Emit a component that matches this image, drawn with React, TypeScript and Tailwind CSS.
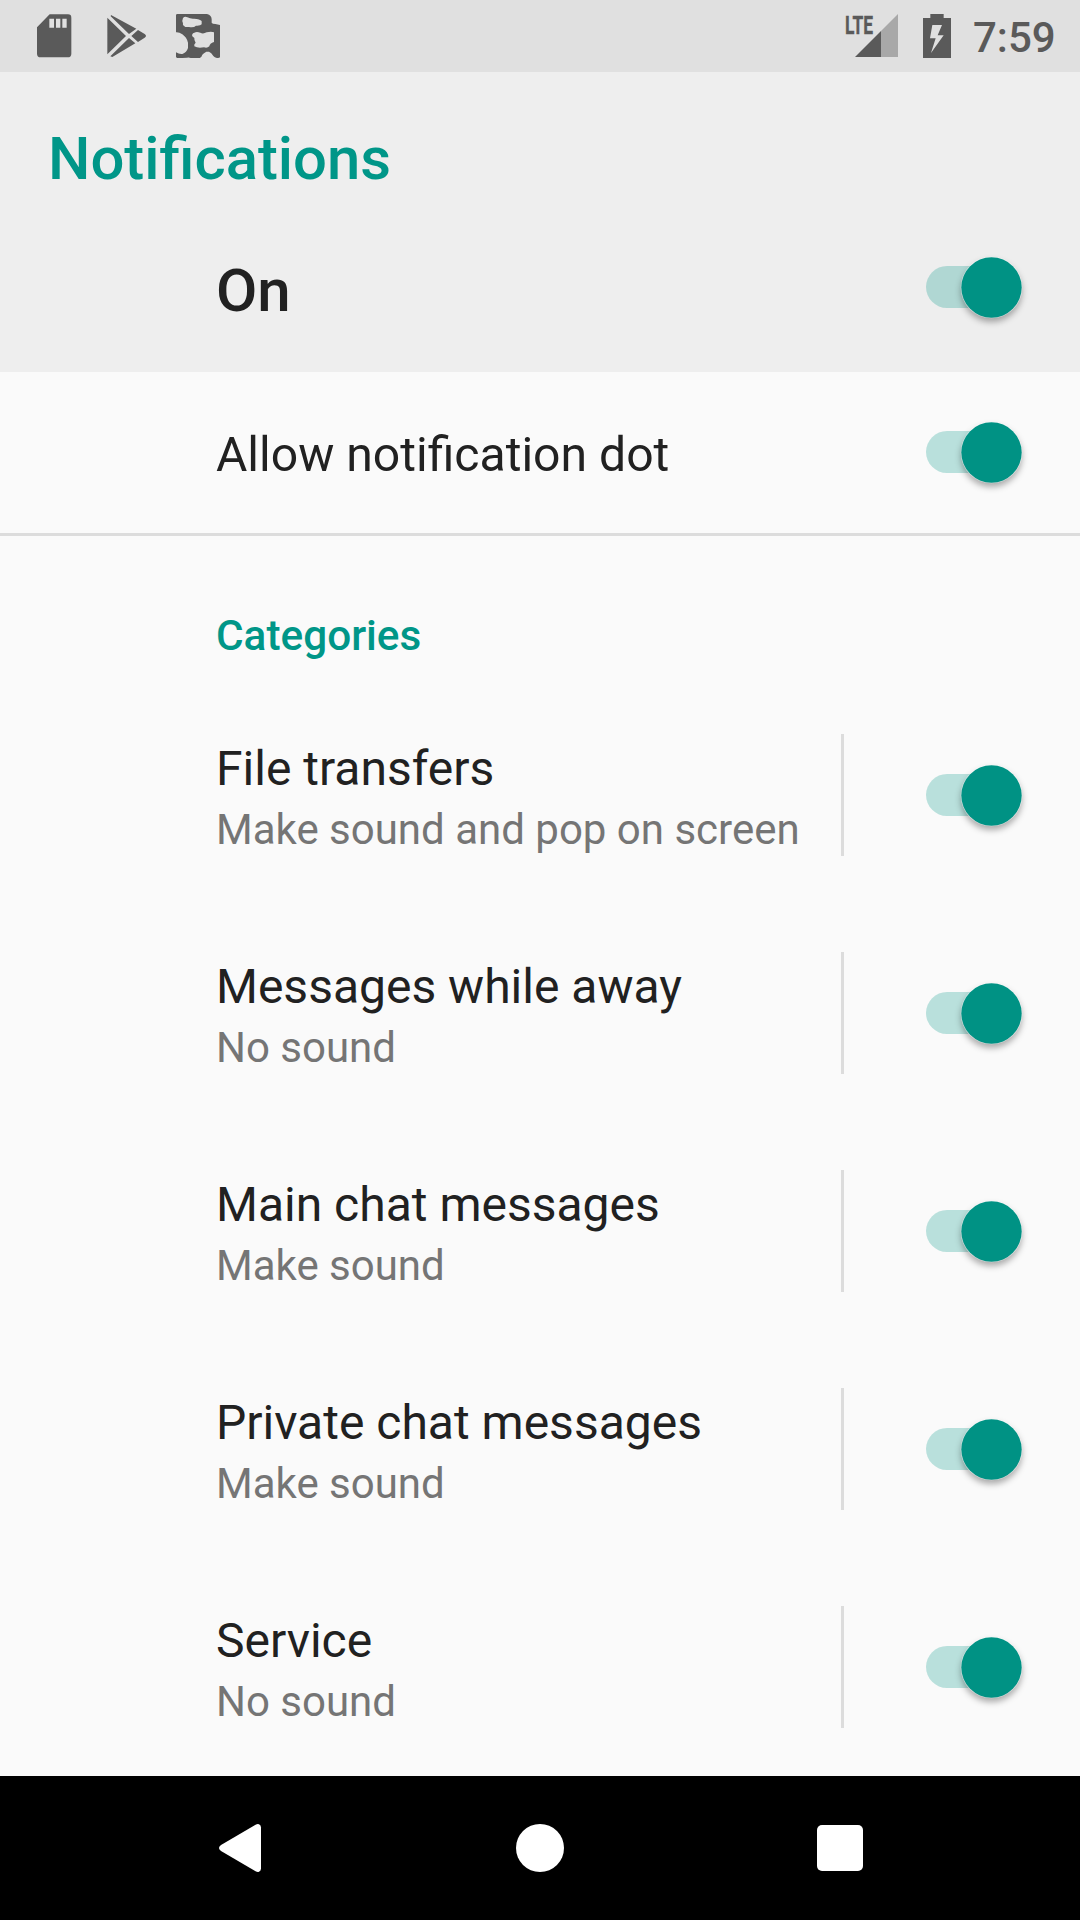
const categories = [
  { title: "File transfers", summary: "Make sound and pop on screen" },
  { title: "Messages while away", summary: "No sound" },
  { title: "Main chat messages", summary: "Make sound" },
  { title: "Private chat messages", summary: "Make sound" },
  { title: "Service", summary: "No sound" },
];

function Toggle() {
  return (
    <div className="relative h-[61px] w-[96px] shrink-0">
      <div className="absolute left-0 top-[9px] h-[42px] w-[90px] rounded-full bg-[#009688]/26" />
      <svg
        className="absolute left-[35px] top-0 overflow-visible drop-shadow-[0_4px_3px_rgba(0,0,0,0.32)]"
        width="61"
        height="61"
        viewBox="0 0 61 61"
      >
        <circle cx="30.5" cy="30.5" r="30.800" fill="#ffffff" fillOpacity="0.5" />
        <circle cx="30.5" cy="30.5" r="30.200" fill="#009284" />
      </svg>
    </div>
  );
}

function StatusBar() {
  return (
    <div className="flex h-[72px] shrink-0 items-start bg-[#e0e0e0] text-[#5a5a5a]">
      <div className="flex h-full pl-[36px]">
        <svg width="36" height="72" viewBox="48 0 108 216" fill="currentColor">
          <path
            fillRule="evenodd"
            d="M89 43H144Q154 43 154 53V161Q154 172 143 172H62Q51 172 51 161V82ZM88 56V83H102V56ZM108 56V83H121V56ZM127 56V83H140V56Z"
          />
        </svg>
        <svg className="ml-[34px]" width="42" height="72" viewBox="258 0 126 216" fill="currentColor">
          <path d="M262 53L318 108L262 163ZM273 45L349 86L327 102L272 49ZM354 90L374 102Q382 108 374 113L354 126L334 108ZM327 114L346 130L277 171L271 169Z" />
        </svg>
        <svg className="ml-[26px]" width="48" height="72" viewBox="462 0 144 216" fill="currentColor">
          <path
            fillRule="evenodd"
            d="M471 42H561Q575 46 575 58V68Q577 72 586 72L600 75V172Q596 176 588 173Q583 172 580 168Q574 158 567 155H559Q551 159 547 164Q545 172 539 174H512Q508 172 501 173L487 174H471L468 171V157Q477 163 487 162Q500 157 504 144V128Q500 112 487 103Q477 96 468 97V44ZM489 54Q495 48 502 52Q512 57 522 56Q540 57 545 63V73Q541 78 528 77Q521 84 507 81H496Q487 76 489 70Q485 62 489 54ZM523 98Q530 94 541 98Q549 103 560 97Q574 93 582 97V126Q569 130 568 139Q562 145 552 142Q534 146 523 139Q521 133 527 128Q522 120 523 114L517 109Q514 101 523 98Z"
          />
        </svg>
      </div>
      <div className="ml-auto flex h-full w-[236px]">
        <svg width="56" height="72" viewBox="0 0 56 72" fill="currentColor">
          <text
            x="1"
            y="33.600"
            fontSize="26.500"
            fontWeight="700"
            fontFamily="Roboto"
            textLength="28"
            lengthAdjust="spacingAndGlyphs"
            stroke="currentColor"
            strokeWidth="0.400"
          >
            LTE
          </text>
          <path d="M54 14V57H37V31Z" opacity="0.42" />
          <path d="M11 57L37 31V57Z" />
        </svg>
        <svg className="ml-[22px]" width="30" height="72" viewBox="276 0 90 216" fill="currentColor">
          <path fillRule="evenodd" d="M301 42H341V54H363V174H279V54H301ZM307 75L300 115H317L303 159L341 106H323L336 75Z" />
        </svg>
        <div className="ml-[21px] w-[107px] pt-[13px] text-[42px] font-medium leading-[50px]">7:59</div>
      </div>
    </div>
  );
}

function NavBar() {
  return (
    <div className="flex h-[144px] shrink-0 items-center justify-between bg-black px-[217px] text-white">
      <svg width="46" height="52" viewBox="0 0 46 52" fill="currentColor">
        <path d="M39 2.500Q40.500 1.800 42 2.300Q44 3.200 44 5.500V46.500Q44 48.800 42 49.700Q40.500 50.200 39 49.500L4 29Q0 26 4 23Z" />
      </svg>
      <div className="size-[48px] rounded-full bg-white" />
      <div className="size-[46px] rounded-[5px] bg-white" />
    </div>
  );
}

export default function App() {
  return (
    <div className="flex h-[1920px] w-[1080px] flex-col overflow-hidden bg-[#fafafa] font-[Roboto,sans-serif] text-[#212121]">
      <StatusBar />
      <header className="flex h-[300px] shrink-0 flex-col bg-[#eeeeee]">
        <h1 className="h-[131px] pl-[48px] pt-[52px] text-[59.8px] font-medium leading-[70px] text-[#009688]">Notifications</h1>
        <div className="flex h-[169px] items-center justify-between pl-[216px] pr-[58px]">
          <span className="pt-[6px] text-[60px] font-medium leading-[70px]">On</span>
          <Toggle />
        </div>
      </header>
      <div className="flex h-[164px] shrink-0 items-center justify-between border-b-[3px] border-[#dcdcdc] pl-[216px] pr-[58px]">
        <span className="pt-[4px] text-[48.1px] leading-[56px]">Allow notification dot</span>
        <Toggle />
      </div>
      <h2 className="h-[150px] shrink-0 pl-[216px] pt-[75px] text-[42.3px] font-medium leading-[50px] text-[#009688]">Categories</h2>
      <main className="flex flex-1 flex-col">
        {categories.map((c) => (
          <div key={c.title} className="flex h-[218px] shrink-0 items-center pl-[216px] pr-[58px]">
            <div className="flex flex-1 flex-col gap-2 pt-[6px]">
              <div className="text-[48px] leading-[56px]">{c.title}</div>
              <div className="text-[42px] leading-[50px] text-[#757575]">{c.summary}</div>
            </div>
            <div className="mr-[82px] h-[122px] w-[3px] bg-[#dcdcdc]" />
            <div className="pt-px">
              <Toggle />
            </div>
          </div>
        ))}
      </main>
      <NavBar />
    </div>
  );
}
